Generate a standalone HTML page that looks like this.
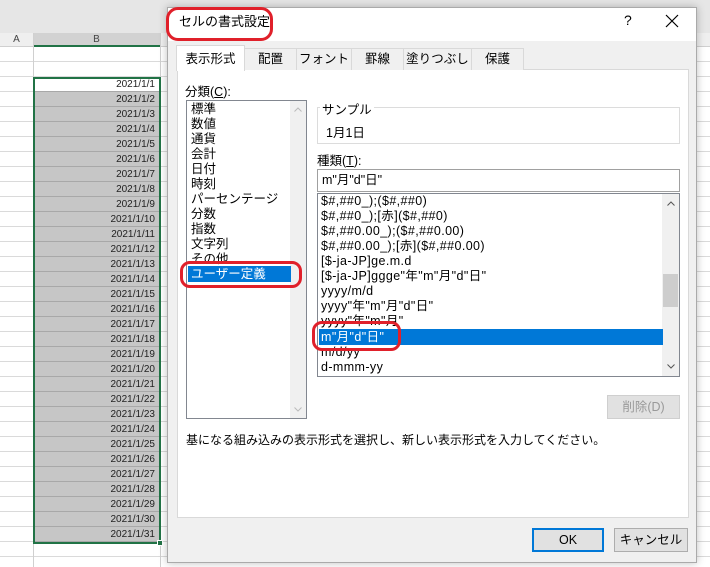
<!DOCTYPE html>
<html><head><meta charset="utf-8"><style>
*{margin:0;padding:0;box-sizing:border-box}
body{width:710px;height:567px;overflow:hidden;background:#fff;position:relative;font-family:"Liberation Sans","Noto Sans CJK JP",sans-serif;font-size:12px;color:#000}
.a{position:absolute}
.grid{position:absolute;left:0;top:46px;width:710px;height:521px;background-image:repeating-linear-gradient(to bottom,transparent 0,transparent 14px,#dadada 14px,#dadada 15px);background-position:0 1px}
.cell{position:absolute;left:34px;width:125px;height:15px;text-align:right;padding-right:4px;font-size:10px;line-height:15px;color:#222;background:#c6c6c6;border-bottom:1px solid #a8a8a8}
.tab{position:absolute;top:48px;height:22px;border:1px solid #d9d9d9;border-bottom:none;background:#f0f0f0;font-size:12.5px;line-height:20px;text-align:center}
.li{position:absolute;left:0;font-size:12.5px;line-height:15px;white-space:nowrap}
.ring{position:absolute;border:3px solid #e0202a;border-radius:10px}
</style></head><body>
<div class="a" style="left:0;top:0;width:710px;height:33px;background:#e6e6e6"></div>
<div class="a" style="left:0;top:33px;width:710px;height:14px;background:#efefef;border-bottom:1px solid #d0d0d0"></div>
<div class="a" style="left:33px;top:33px;width:127px;height:14px;background:#d2d2d2;border-bottom:2px solid #217346;text-align:center;font-size:10px;line-height:13px;color:#444">B</div>
<div class="a" style="left:0;top:33px;width:33px;height:14px;text-align:center;font-size:10px;line-height:13px;color:#444">A</div>
<div class="grid"></div>
<div class="a" style="left:33px;top:33px;width:1px;height:534px;background:#d0d0d0"></div>
<div class="a" style="left:160px;top:33px;width:1px;height:534px;background:#d0d0d0"></div>
<div id="cells"></div>
<div class="a" style="left:33px;top:77px;width:128px;height:467px;border:2px solid #217346"></div>
<div class="a" style="left:157px;top:540px;width:6px;height:6px;background:#217346;border:1px solid #fff"></div>

<!-- dialog -->
<div class="a" style="left:167px;top:7px;width:530px;height:556px;background:#f0f0f0;border:1px solid #aaa;box-shadow:0 0 8px rgba(0,0,0,.25)"></div>
<div class="a" style="left:168px;top:8px;width:528px;height:33px;background:#fff"></div>
<div class="a" style="left:179px;top:13px;font-size:13px;line-height:18px">セルの書式設定</div>
<div class="ring" style="left:166px;top:7px;width:107px;height:34px;border-radius:12px"></div>
<div class="a" style="left:624px;top:12px;font-size:14px">?</div>
<svg class="a" style="left:665px;top:14px" width="14" height="14"><path d="M1 1L13 13M13 1L1 13" stroke="#000" stroke-width="1.2"/></svg>

<div class="a" style="left:177px;top:69px;width:512px;height:449px;background:#fff;border:1px solid #d9d9d9"></div>
<div class="tab" style="left:176px;top:45px;width:69px;height:26px;background:#fff;z-index:2;line-height:26px">表示形式</div>
<div class="tab" style="left:244px;width:53px">配置</div>
<div class="tab" style="left:296px;width:56px">フォント</div>
<div class="tab" style="left:351px;width:53px">罫線</div>
<div class="tab" style="left:403px;width:69px">塗りつぶし</div>
<div class="tab" style="left:471px;width:53px">保護</div>

<div class="a" style="left:185px;top:81px;font-size:12.5px">分類(<u>C</u>):</div>
<div class="a" style="left:186px;top:100px;width:121px;height:319px;border:1px solid #828790;background:#fff">
 <div class="a" style="right:0;top:0;width:16px;height:317px;background:#f0f0f0"></div>
 <svg class="a" style="right:4px;top:6px" width="8" height="5"><path d="M0.5 4.5L4 1L7.5 4.5" stroke="#bbb" fill="none"/></svg>
 <svg class="a" style="right:4px;top:306px" width="8" height="5"><path d="M0.5 0.5L4 4L7.5 0.5" stroke="#bbb" fill="none"/></svg>
 <div class="a" style="left:4px;top:0">
 <div class="li" style="top:1px">標準</div><div class="li" style="top:16px">数値</div><div class="li" style="top:31px">通貨</div><div class="li" style="top:46px">会計</div><div class="li" style="top:61px">日付</div><div class="li" style="top:76px">時刻</div><div class="li" style="top:91px">パーセンテージ</div><div class="li" style="top:106px">分数</div><div class="li" style="top:121px">指数</div><div class="li" style="top:136px">文字列</div><div class="li" style="top:151px">その他</div>
 </div>
 <div class="a" style="left:1px;top:165px;width:103px;height:16px;background:#0078d7;color:#fff;padding-left:3px;line-height:16px;font-size:12.5px">ユーザー定義</div>
</div>
<div class="ring" style="left:180px;top:261px;width:122px;height:27px"></div>

<div class="a" style="left:317px;top:107px;width:363px;height:37px;border:1px solid #dcdcdc"></div>
<div class="a" style="left:320px;top:99px;background:#fff;padding:0 2px;font-size:12.5px">サンプル</div>
<div class="a" style="left:326px;top:122px;font-size:12.5px">1月1日</div>
<div class="a" style="left:317px;top:150px;font-size:12.5px">種類(<u>T</u>):</div>
<div class="a" style="left:317px;top:169px;width:363px;height:23px;border:1px solid #a0a0a0;padding-left:4px;line-height:21px;font-size:12.5px">m"月"d"日"</div>
<div class="a" style="left:317px;top:193px;width:363px;height:184px;border:1px solid #828790;background:#fff;overflow:hidden">
 <div class="a" style="right:0;top:0;width:17px;height:182px;background:#f0f0f0"></div>
 <div class="a" style="right:1px;top:80px;width:15px;height:33px;background:#cdcdcd"></div>
 <svg class="a" style="right:4px;top:7px" width="8" height="5"><path d="M0.5 4.5L4 1L7.5 4.5" stroke="#555" fill="none"/></svg>
 <svg class="a" style="right:4px;top:170px" width="8" height="5"><path d="M0.5 0.5L4 4L7.5 0.5" stroke="#555" fill="none"/></svg>
 <div class="a" style="left:1px;top:135px;width:344px;height:16px;background:#0078d7"></div>
 <div class="a" style="left:3px;top:0;letter-spacing:0.4px">
 <div class="li" style="top:0">$#,##0_);($#,##0)</div>
 <div class="li" style="top:15px">$#,##0_);[赤]($#,##0)</div>
 <div class="li" style="top:30px">$#,##0.00_);($#,##0.00)</div>
 <div class="li" style="top:45px">$#,##0.00_);[赤]($#,##0.00)</div>
 <div class="li" style="top:60px">[$-ja-JP]ge.m.d</div>
 <div class="li" style="top:75px">[$-ja-JP]ggge"年"m"月"d"日"</div>
 <div class="li" style="top:90px">yyyy/m/d</div>
 <div class="li" style="top:105px">yyyy"年"m"月"d"日"</div>
 <div class="li" style="top:120px">yyyy"年"m"月"</div>
 <div class="li" style="top:136px;color:#fff">m"月"d"日"</div>
 <div class="li" style="top:151px">m/d/yy</div>
 <div class="li" style="top:166px">d-mmm-yy</div>
 </div>
</div>
<div class="ring" style="left:312px;top:321px;width:89px;height:30px"></div>

<div class="a" style="left:607px;top:395px;width:73px;height:24px;background:#e1e1e1;border:1px solid #cfcfcf;color:#999;text-align:center;line-height:22px;font-size:12.5px">削除(D)</div>
<div class="a" style="left:186px;top:431px;font-size:12px">基になる組み込みの表示形式を選択し、新しい表示形式を入力してください。</div>

<div class="a" style="left:532px;top:528px;width:72px;height:24px;background:#e1e1e1;border:2px solid #0078d7;text-align:center;line-height:20px;font-size:12.5px">OK</div>
<div class="a" style="left:614px;top:528px;width:74px;height:24px;background:#e1e1e1;border:1px solid #adadad;text-align:center;line-height:22px;font-size:12.5px">キャンセル</div>

<script>
var h='';for(var i=1;i<=31;i++){var t=77+(i-1)*15;h+='<div class="cell" style="top:'+t+'px;'+(i==1?'background:#fff;':'')+'">2021/1/'+i+'</div>';}
document.getElementById('cells').innerHTML=h;
</script>
</body></html>
